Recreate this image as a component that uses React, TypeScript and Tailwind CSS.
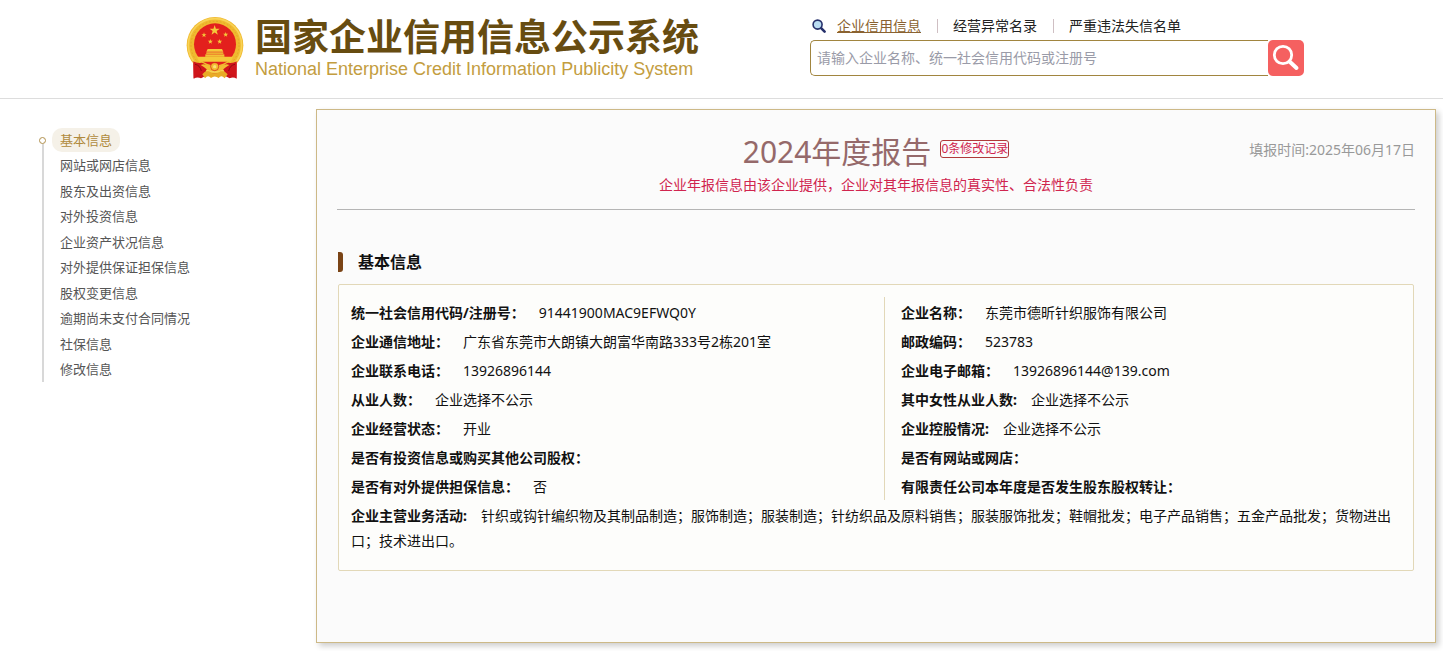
import { useState } from "react";

interface Field {
  label: string;
  value: string;
}

const searchTabs = ["企业信用信息", "经营异常名录", "严重违法失信名单"];

const sections = [
  "基本信息",
  "网站或网店信息",
  "股东及出资信息",
  "对外投资信息",
  "企业资产状况信息",
  "对外提供保证担保信息",
  "股权变更信息",
  "逾期尚未支付合同情况",
  "社保信息",
  "修改信息",
];

const leftFields: Field[] = [
  { label: "统一社会信用代码/注册号：", value: "91441900MAC9EFWQ0Y" },
  { label: "企业通信地址：", value: "广东省东莞市大朗镇大朗富华南路333号2栋201室" },
  { label: "企业联系电话：", value: "13926896144" },
  { label: "从业人数：", value: "企业选择不公示" },
  { label: "企业经营状态：", value: "开业" },
  { label: "是否有投资信息或购买其他公司股权：", value: "" },
  { label: "是否有对外提供担保信息：", value: "否" },
];

const rightFields: Field[] = [
  { label: "企业名称：", value: "东莞市德昕针织服饰有限公司" },
  { label: "邮政编码：", value: "523783" },
  { label: "企业电子邮箱：", value: "13926896144@139.com" },
  { label: "其中女性从业人数:", value: "企业选择不公示" },
  { label: "企业控股情况:", value: "企业选择不公示" },
  { label: "是否有网站或网店：", value: "" },
  { label: "有限责任公司本年度是否发生股东股权转让：", value: "" },
];

const STAR =
  "M0 -10 L2.3 -3.2 L9.5 -3.1 L3.8 1.2 L5.9 8.1 L0 4 L-5.9 8.1 L-3.8 1.2 L-9.5 -3.1 L-2.3 -3.2 Z";

function Emblem() {
  return (
    <svg viewBox="18 24 174 192" className="h-16 w-[58px] shrink-0" aria-hidden="true">
      <path d="M40 158 L170 158 L170 212 Q160 206 149 211 L134 203 L78 203 L63 211 Q52 206 41 212 Z" fill="#c9141b" />
      <circle cx="105" cy="112" r="85" fill="#f0b92f" />
      <circle cx="105" cy="112" r="80" fill="none" stroke="#f8d356" strokeWidth="5" />
      <circle cx="105" cy="112" r="72" fill="none" stroke="#e2a727" strokeWidth="3" strokeDasharray="5 6" />
      <circle cx="105" cy="109" r="63" fill="#e3201d" />
      <g fill="#f5c83a">
        <path d={STAR} transform="translate(104 67) scale(1.6)" />
        <path d={STAR} transform="translate(72 81) scale(0.8)" />
        <path d={STAR} transform="translate(137 80) scale(0.8)" />
        <path d={STAR} transform="translate(91 101) scale(0.8)" />
        <path d={STAR} transform="translate(119 101) scale(0.8)" />
        <path d="M83 123 H126 L130 131 H79 Z" />
        <path d="M79 133 H130 V138 H79 Z" />
        <path d="M76 139 H133 V150 H76 Z" />
        <path d="M51 146 H159 Q157 155 150 161 H59 Q53 155 51 146 Z" />
      </g>
      <path d="M80 137 H129 M76 145 H133" stroke="#e58a24" strokeWidth="1.5" />
      <path d="M40 160 Q52 167 64 164 Q76 166 83 179 L72 199 Q56 194 41 211 Z" fill="#d0151b" />
      <path d="M170 160 Q158 167 146 164 Q134 166 127 179 L138 199 Q154 194 169 211 Z" fill="#d0151b" />
      <path d="M45 169 Q60 171 64 189 M165 169 Q150 171 146 189" fill="none" stroke="#8f0d12" strokeWidth="3" />
      <path d="M62 171 Q74 165 84 174 L105 179 L126 174 Q136 165 148 171 Q138 176 130 184 L105 189 L80 184 Q72 176 62 171 Z" fill="#f2bd32" />
      <circle cx="104" cy="176" r="12" fill="#f2bd32" stroke="#d0151b" strokeWidth="2" />
      <circle cx="104" cy="176" r="5" fill="#fbe078" />
      <path d="M67 199 Q75 187 87 190 Q104 203 122 190 Q134 187 143 199 L134 211 Q124 199 116 210 Q104 201 93 210 Q84 199 75 211 Z" fill="#e8ab26" />
    </svg>
  );
}

function SmallSearchIcon() {
  return (
    <svg viewBox="0 0 14 14" className="size-3.5" aria-hidden="true">
      <circle cx="5.6" cy="5.6" r="4.5" fill="#b9dcf2" stroke="#26306b" strokeWidth="1.6" />
      <path d="M9.4 9.4 L12.6 12.6" stroke="#26306b" strokeWidth="2.6" strokeLinecap="round" />
    </svg>
  );
}

function FieldList({ fields }: { fields: Field[] }) {
  return (
    <dl>
      {fields.map((field) => (
        <div key={field.label} className="flex h-[29px] items-center gap-3.5 pt-0.5">
          <dt className="font-bold">{field.label}</dt>
          <dd>{field.value}</dd>
        </div>
      ))}
    </dl>
  );
}

export default function App() {
  const [tab, setTab] = useState(searchTabs[0]);
  const [section, setSection] = useState(sections[0]);
  const [keyword, setKeyword] = useState("");

  return (
    <div className="min-h-screen bg-white font-['Noto_Sans','Noto_Sans_CJK_SC',sans-serif] text-sm text-[#111]">
      <header className="border-b border-[#ddd]">
        <div className="mx-auto flex h-[98px] max-w-[1199px] items-start justify-between pr-[17px] pl-16">
          <div className="flex items-start gap-[11px] pt-4">
            <Emblem />
            <div className="whitespace-nowrap">
              <h1 className="font-['Noto_Sans_CJK_SC',sans-serif] text-[37px] leading-[38px] font-bold text-[#674c10]">
                国家企业信用信息公示系统
              </h1>
              <p className="font-['Liberation_Sans',sans-serif] text-lg leading-[30px] text-[#c39d40]">
                National Enterprise Credit Information Publicity System
              </p>
            </div>
          </div>

          <div className="w-[494px] pt-3">
            <nav className="flex h-7 items-center">
              <span className="mr-[11px] ml-0.5">
                <SmallSearchIcon />
              </span>
              {searchTabs.map((name, i) => (
                <span key={name} className="flex items-center">
                  {i > 0 && <span className="mr-[15px] ml-4 h-3.5 w-px bg-[#cfbfc3]" />}
                  <a
                    href="#"
                    onClick={() => setTab(name)}
                    className={tab === name ? "text-[#8a6230] underline" : "text-[#222]"}
                  >
                    {name}
                  </a>
                </span>
              ))}
            </nav>
            <form className="flex h-9" onSubmit={(e) => e.preventDefault()}>
              <input
                type="text"
                aria-label="搜索企业"
                value={keyword}
                onChange={(e) => setKeyword(e.target.value)}
                placeholder="请输入企业名称、统一社会信用代码或注册号"
                className="min-w-0 flex-1 rounded-l-[5px] border border-r-0 border-[#a1853f] px-1.5 outline-none placeholder:text-[#9a9ba8]"
              />
              <button
                type="submit"
                aria-label="搜索"
                className="flex size-9 items-center justify-center rounded-[5px] bg-[#f56060]"
              >
                <svg viewBox="0 0 36 36" className="size-9" fill="none" stroke="#fff" aria-hidden="true">
                  <circle cx="15" cy="15" r="8.7" strokeWidth="2.8" />
                  <path d="M21.5 21.5 L28.5 28" strokeWidth="4" strokeLinecap="round" />
                </svg>
              </button>
            </form>
          </div>
        </div>
      </header>

      <div className="flex items-start pt-2.5 pr-[7px] pb-2">
        <aside className="w-[316px] shrink-0 pt-[18px] pl-[39px]">
          <div className="flex">
            <div className="flex w-[7px] flex-col items-center pt-2.5">
              <span className="size-[7px] rounded-full border border-[#b08f4c]" />
              <span className="w-0.5 flex-1 bg-[#d8d8d8]" />
            </div>
            <ul className="ml-1.5 grid h-[255px] auto-rows-fr text-[13px]">
              {sections.map((name) => (
                <li key={name} className="flex items-center">
                  <a
                    href="#"
                    onClick={() => setSection(name)}
                    className={
                      section === name
                        ? "rounded-[10px] bg-[#f5f1e8] px-2 leading-6 text-[#b08a3c]"
                        : "px-2 leading-6 text-[#555]"
                    }
                  >
                    {name}
                  </a>
                </li>
              ))}
            </ul>
          </div>
        </aside>

        <main className="min-w-0 flex-1 border border-[#cdb987] bg-[#fbfbfb] px-5 pb-[71px] shadow-[3px_3px_6px_rgba(0,0,0,0.2)]">
          <div className="border-b border-[#b5b5b5] pt-5 pb-[13px]">
            <div className="grid grid-cols-[1fr_auto_1fr] items-center">
              <div className="col-start-2 flex items-center gap-[9px]">
                <h2 className="text-3xl leading-11 text-[#95696a]">2024年度报告</h2>
                <button
                  type="button"
                  className="mb-1.5 h-[18px] rounded-[3px] border border-[#b03a3a] text-xs leading-4 text-[#d0254f]"
                >
                  0条修改记录
                </button>
              </div>
              <p className="pb-1 text-right text-[#999]">填报时间:2025年06月17日</p>
            </div>
            <p className="text-center leading-[22px] text-[#d0254f]">
              企业年报信息由该企业提供，企业对其年报信息的真实性、合法性负责
            </p>
          </div>

          <h3 className="mt-10 flex items-center pl-px text-base leading-6 font-bold">
            <span className="mr-[15px] h-5 w-[5px] rounded-r-[3px] bg-[#7a4416]" />
            基本信息
          </h3>

          <section className="mx-px mt-2.5 rounded-xs border border-[#e2d8b8] bg-[#fdfdfb] px-3 pt-3 pb-[17px]">
            <div className="grid grid-cols-[533fr_517fr]">
              <FieldList fields={leftFields} />
              <div className="border-l border-[#e2d8b8] pl-4">
                <FieldList fields={rightFields} />
              </div>
            </div>
            <p className="pt-[3px] leading-[25px]">
              <b className="mr-3.5">企业主营业务活动:</b>
              针织或钩针编织物及其制品制造；服饰制造；服装制造；针纺织品及原料销售；服装服饰批发；鞋帽批发；电子产品销售；五金产品批发；货物进出口；技术进出口。
            </p>
          </section>
        </main>
      </div>
    </div>
  );
}
